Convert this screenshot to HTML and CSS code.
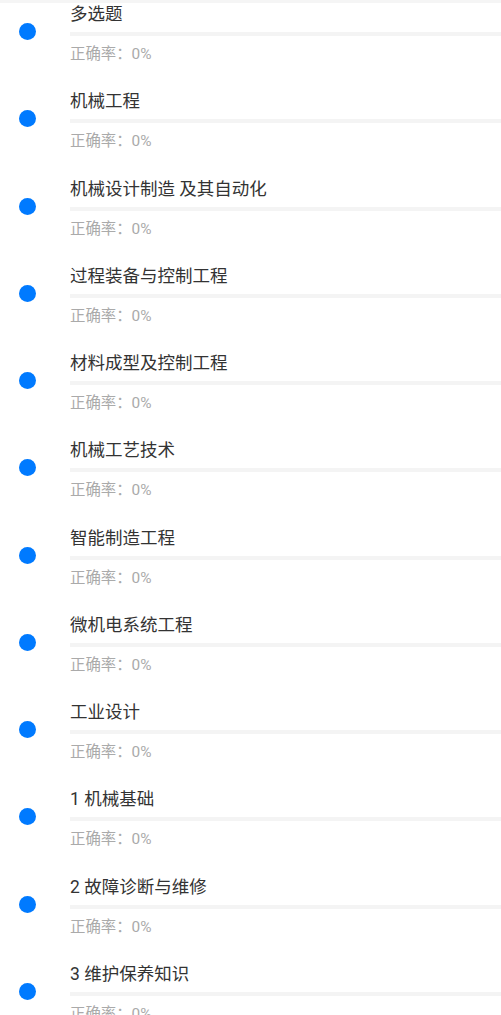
FILE: index.html
```html
<!DOCTYPE html>
<html lang="zh-CN">

<head>
  <meta charset="UTF-8">
  <meta name="viewport" content="width=device-width, initial-scale=1.0">
  <title>练习分类</title>
  <link rel="stylesheet" href="styles.css">
</head>

<body>
  <ul class="category-list">
    <li class="category">
      <span class="dot"></span>
      <div class="info">
        <p class="name">多选题</p>
        <div class="bar"></div>
        <p class="rate">正确率：0%</p>
      </div>
    </li>
    <li class="category">
      <span class="dot"></span>
      <div class="info">
        <p class="name">机械工程</p>
        <div class="bar"></div>
        <p class="rate">正确率：0%</p>
      </div>
    </li>
    <li class="category">
      <span class="dot"></span>
      <div class="info">
        <p class="name">机械设计制造 及其自动化</p>
        <div class="bar"></div>
        <p class="rate">正确率：0%</p>
      </div>
    </li>
    <li class="category">
      <span class="dot"></span>
      <div class="info">
        <p class="name">过程装备与控制工程</p>
        <div class="bar"></div>
        <p class="rate">正确率：0%</p>
      </div>
    </li>
    <li class="category">
      <span class="dot"></span>
      <div class="info">
        <p class="name">材料成型及控制工程</p>
        <div class="bar"></div>
        <p class="rate">正确率：0%</p>
      </div>
    </li>
    <li class="category">
      <span class="dot"></span>
      <div class="info">
        <p class="name">机械工艺技术</p>
        <div class="bar"></div>
        <p class="rate">正确率：0%</p>
      </div>
    </li>
    <li class="category">
      <span class="dot"></span>
      <div class="info">
        <p class="name">智能制造工程</p>
        <div class="bar"></div>
        <p class="rate">正确率：0%</p>
      </div>
    </li>
    <li class="category">
      <span class="dot"></span>
      <div class="info">
        <p class="name">微机电系统工程</p>
        <div class="bar"></div>
        <p class="rate">正确率：0%</p>
      </div>
    </li>
    <li class="category">
      <span class="dot"></span>
      <div class="info">
        <p class="name">工业设计</p>
        <div class="bar"></div>
        <p class="rate">正确率：0%</p>
      </div>
    </li>
    <li class="category">
      <span class="dot"></span>
      <div class="info">
        <p class="name">1 机械基础</p>
        <div class="bar"></div>
        <p class="rate">正确率：0%</p>
      </div>
    </li>
    <li class="category">
      <span class="dot"></span>
      <div class="info">
        <p class="name">2 故障诊断与维修</p>
        <div class="bar"></div>
        <p class="rate">正确率：0%</p>
      </div>
    </li>
    <li class="category">
      <span class="dot"></span>
      <div class="info">
        <p class="name">3 维护保养知识</p>
        <div class="bar"></div>
        <p class="rate">正确率：0%</p>
      </div>
    </li>
  </ul>
</body>

</html>
```

FILE: styles.css
```css
body {
  margin: 0;
  background-color: #fff;
  font-family: Roboto, "Noto Sans CJK SC", sans-serif;
  overflow: hidden;
}
.category-list {
  list-style: none;
  margin: 0;
  padding: 0;
  border-top: 3px solid #f5f5f5;
}
.category {
  display: flex;
  align-items: flex-start;
  height: 87.27px;
}
.dot {
  flex: none;
  width: 17px;
  height: 17px;
  margin: 20px 34px 0 19px;
  border-radius: 50%;
  background-color: #007aff;
}
.info {
  flex: 1;
}
.name {
  margin: 0;
  font-size: 17.5px;
  line-height: 22px;
  color: #333;
}
.bar {
  height: 4px;
  margin-top: 7px;
  background-color: #f4f4f4;
}
.rate {
  margin: 8px 0 0;
  font-size: 15.4px;
  line-height: 20px;
  color: #aaa;
}
```
